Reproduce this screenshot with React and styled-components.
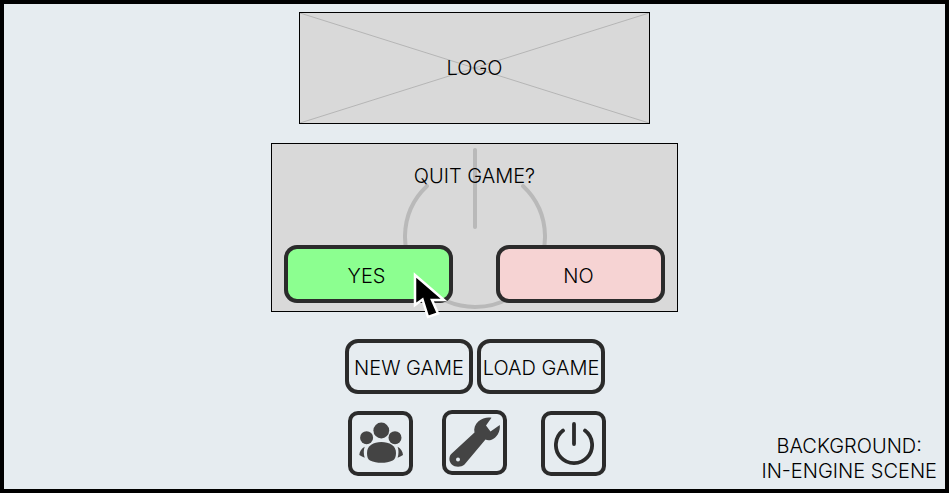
import React from 'react'
import styled, { createGlobalStyle } from 'styled-components'

const GlobalStyle = createGlobalStyle`
  html, body {
    margin: 0;
    padding: 0;
    background: #e6ecf0;
  }
  * {
    box-sizing: border-box;
  }
`

function PowerIcon() {
  return (
    <svg width="40" height="44" viewBox="0 0 40 44" fill="none" stroke="#2b2b2b" strokeWidth="3.8" strokeLinecap="round">
      <path d="M20 1.9 V22" />
      <path d="M9 8.6 A 18.1 18.1 0 1 0 31 8.6" />
    </svg>
  )
}

function WatermarkIcon() {
  return (
    <svg width="144" height="162" viewBox="0 0 144 162" fill="none" stroke="#b9b9b9" strokeWidth="4" strokeLinecap="round">
      <path d="M72 2 V79" />
      <path d="M24 38 A 70 70 0 1 0 120 38" />
    </svg>
  )
}

function GroupIcon() {
  return (
    <svg width="57" height="57" viewBox="0 0 57 57" fill="#444444">
      <circle cx="29.3" cy="15.5" r="7.9" />
      <circle cx="14.6" cy="22.7" r="6.5" />
      <circle cx="43" cy="22.7" r="6.5" />
      <path d="M15 38 C15 30.5 21.5 27 29.3 27 C37.4 27 44 30.5 44 38 C44 42 42.7 44.5 40.7 45.5 C34 48.6 25 48.6 18 45.5 C16 44.5 15 42 15 38 Z" />
      <path d="M7.3 40 C7.5 36.5 9.5 33.5 12.7 31.7 C11.5 35 11.5 39 12.7 42.7 C11 42 9 41 7.3 40 Z" />
      <path d="M51 40 C50.8 36.5 48.8 33.5 45.6 31.7 C46.8 35 46.8 39 45.6 42.7 C47.3 42 49.3 41 51 40 Z" />
    </svg>
  )
}

function WrenchIcon() {
  return (
    <svg width="57" height="57" viewBox="0 0 57 57">
      <path
        fill="#444444"
        d="M45.5 3.8 L40 11.5 L44.5 17.5 L53.8 11 C54.5 17.5 51 24 45 26 C43 26.6 41 26.4 39.5 25.6 L18.5 50.5 C15 53.5 9 53.5 5.8 50.5 C2.6 47.2 2.8 42.8 5.2 40 L28.5 18.5 C27.6 14.5 29 10.5 32.5 7.3 C36 4.3 41 3 45.5 3.8 Z"
      />
      <circle cx="12" cy="45.5" r="2" fill="#e6ecf0" />
    </svg>
  )
}

function Cursor() {
  return (
    <svg width="36" height="50" viewBox="0 0 36 50">
      <path d="M3 3 L3 33 L10.5 27.5 L16 45 L26 41.5 L20 28 L32 28 Z" fill="#000000" stroke="#ffffff" strokeWidth="2.5" strokeLinejoin="miter" />
    </svg>
  )
}

export default function App() {
  return (
    <>
      <GlobalStyle />
      <Frame>
        <LogoBox>
          <CrossLines viewBox="0 0 100 100" preserveAspectRatio="none">
            <line x1="0" y1="0" x2="100" y2="100" vectorEffect="non-scaling-stroke" />
            <line x1="100" y1="0" x2="0" y2="100" vectorEffect="non-scaling-stroke" />
          </CrossLines>
          <LogoLabel>LOGO</LogoLabel>
        </LogoBox>

        <Dialog>
          <Watermark>
            <WatermarkIcon />
          </Watermark>
          <DialogTitle>QUIT GAME?</DialogTitle>
          <DialogActions>
            <ChoiceButton $bg="#8cff90">YES</ChoiceButton>
            <ChoiceButton $bg="#f6d3d3">NO</ChoiceButton>
          </DialogActions>
          <CursorSpot>
            <Cursor />
          </CursorSpot>
        </Dialog>

        <MenuRow>
          <MenuButton>NEW GAME</MenuButton>
          <MenuButton>LOAD GAME</MenuButton>
        </MenuRow>

        <IconRow>
          <IconButton $drop={1}>
            <GroupIcon />
          </IconButton>
          <IconButton $left={29}>
            <WrenchIcon />
          </IconButton>
          <IconButton $left={34} $drop={1}>
            <PowerIcon />
          </IconButton>
        </IconRow>

        <BackgroundNote>
          BACKGROUND:
          <br />
          IN-ENGINE SCENE
        </BackgroundNote>
      </Frame>
    </>
  )
}

const Frame = styled.div`
  position: relative;
  width: 949px;
  height: 493px;
  border: 4px solid #000000;
  padding-top: 8px;
  background: #e6ecf0;
  display: flex;
  flex-direction: column;
  align-items: center;
  font-family: Inter, "Liberation Sans", sans-serif;
  font-size: 20px;
  font-weight: 350;
  color: #000000;
  overflow: hidden;
`

const LogoBox = styled.div`
  position: relative;
  width: 351px;
  height: 112px;
  background: #d9d9d9;
  border: 1px solid #000000;
  display: flex;
  align-items: center;
  justify-content: center;
`

const CrossLines = styled.svg`
  position: absolute;
  inset: 0;
  width: 100%;
  height: 100%;
  stroke: #b5b5b5;
  stroke-width: 1;
`

const LogoLabel = styled.span`
  position: relative;
`

const Dialog = styled.div`
  position: relative;
  width: 407px;
  height: 169px;
  margin-top: 19px;
  padding: 0 12px;
  background: #d9d9d9;
  border: 1px solid #000000;
  display: flex;
  flex-direction: column;
`

const Watermark = styled.div`
  position: absolute;
  left: 131px;
  top: 4px;
  line-height: 0;
`

const DialogTitle = styled.div`
  position: relative;
  margin-top: 20px;
  height: 24px;
  line-height: 24px;
  text-align: center;
`

const DialogActions = styled.div`
  position: relative;
  display: flex;
  justify-content: space-between;
  margin-top: 57px;
`

const ChoiceButton = styled.div`
  width: 169px;
  height: 58px;
  padding: 3px 4px 0 0;
  background: ${(p) => p.$bg};
  border: 4px solid #2b2b2b;
  border-radius: 13px;
  display: flex;
  align-items: center;
  justify-content: center;
`

const CursorSpot = styled.div`
  position: absolute;
  left: 140px;
  top: 128px;
  line-height: 0;
`

const MenuRow = styled.div`
  display: flex;
  gap: 4px;
  margin-top: 27px;
  padding-left: 1px;
`

const MenuButton = styled.div`
  width: 128px;
  height: 55px;
  padding-top: 2px;
  border: 4px solid #2b2b2b;
  border-radius: 13px;
  display: flex;
  align-items: center;
  justify-content: center;
  white-space: nowrap;
`

const IconRow = styled.div`
  display: flex;
  align-items: flex-start;
  margin-top: 16px;
  padding-left: 5px;
`

const IconButton = styled.div`
  width: 65px;
  height: 65px;
  margin-left: ${(p) => p.$left || 0}px;
  margin-top: ${(p) => p.$drop || 0}px;
  border: 4px solid #2b2b2b;
  border-radius: 10px;
  display: flex;
  align-items: center;
  justify-content: center;
`

const BackgroundNote = styled.div`
  position: absolute;
  right: 8px;
  bottom: 5px;
  text-align: center;
  line-height: 25px;
`
